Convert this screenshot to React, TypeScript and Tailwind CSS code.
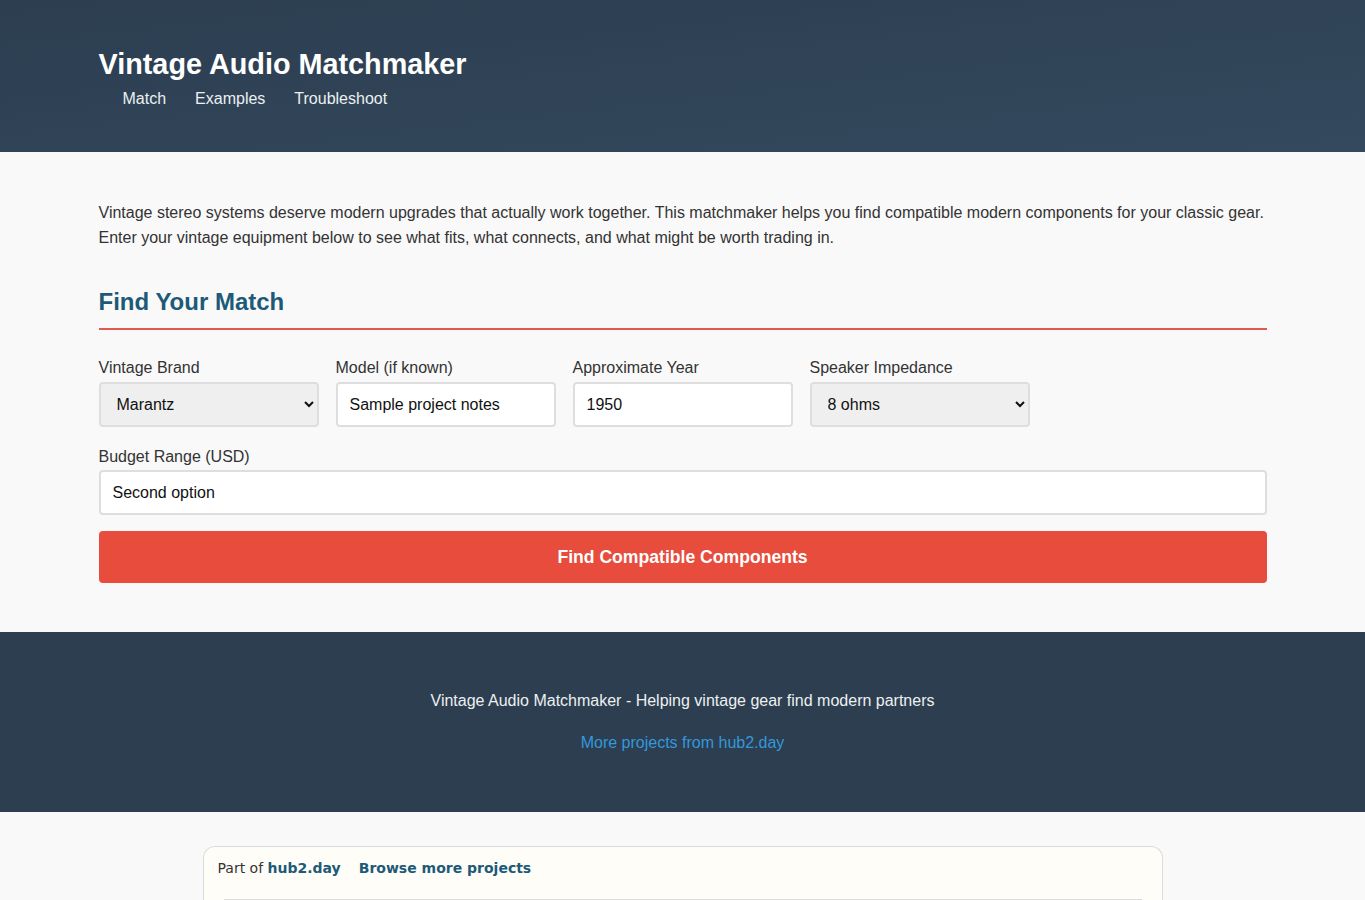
export default function App() {
  const fieldBox =
    'h-[45px] w-full rounded-[4px] border-2 border-[#dedede] px-[12px] text-[16px] text-[#111] outline-none'

  return (
    <div className="min-h-screen bg-[#f9f9f9] font-['Liberation_Sans',Arial,sans-serif] text-[#333]">
      {/* Header */}
      <header className="h-[152px] bg-gradient-to-br from-[#2c3e50] to-[#34495e] pt-[46px]">
        <div className="mx-auto w-[1168px]">
          <h1 className="text-[28.8px] font-bold leading-[36px] text-white">Vintage Audio Matchmaker</h1>
          <nav className="mt-[7px] flex gap-[29px] pl-[24px] text-[16px] leading-[20px] text-[#ecf0f1]">
            <a href="#match">Match</a>
            <a href="#examples">Examples</a>
            <a href="#troubleshoot">Troubleshoot</a>
          </nav>
        </div>
      </header>

      {/* Main */}
      <main className="mx-auto w-[1168px] pb-[49px] pt-[48px]">
        <p className="text-[16px] leading-[25px] text-[#333]">
          Vintage stereo systems deserve modern upgrades that actually work together. This matchmaker helps you find
          compatible modern components for your classic gear. Enter your vintage equipment below to see what fits, what
          connects, and what might be worth trading in.
        </p>

        <h2 className="mt-[37px] border-b-2 border-[#e15b4c] pb-[12px] text-[24px] font-bold leading-[29px] text-[#1d5a78]">
          Find Your Match
        </h2>

        <div className="mt-[28px] flex gap-[17px]">
          <div className="w-[220px]">
            <label className="block text-[16px] leading-[20px] text-[#333]">Vintage Brand</label>
            <select className={`${fieldBox} mt-[4px] bg-[#efefef] pl-[12px]`} defaultValue="Marantz">
              <option>Marantz</option>
              <option>Pioneer</option>
              <option>Sansui</option>
            </select>
          </div>
          <div className="w-[220px]">
            <label className="block text-[16px] leading-[20px] text-[#333]">Model (if known)</label>
            <input className={`${fieldBox} mt-[4px] bg-white`} defaultValue="Sample project notes" />
          </div>
          <div className="w-[220px]">
            <label className="block text-[16px] leading-[20px] text-[#333]">Approximate Year</label>
            <input className={`${fieldBox} mt-[4px] bg-white`} defaultValue="1950" />
          </div>
          <div className="w-[220px]">
            <label className="block text-[16px] leading-[20px] text-[#333]">Speaker Impedance</label>
            <select className={`${fieldBox} mt-[4px] bg-[#efefef] pl-[12px]`} defaultValue="8 ohms">
              <option>4 ohms</option>
              <option>8 ohms</option>
              <option>16 ohms</option>
            </select>
          </div>
        </div>

        <div className="mt-[20px]">
          <label className="block text-[16px] leading-[20px] text-[#333]">Budget Range (USD)</label>
          <input className={`${fieldBox} mt-[3px] h-[44px] bg-white`} defaultValue="Second option" />
        </div>

        <button className="mt-[16px] h-[52px] w-full rounded-[4px] bg-[#e74c3c] text-[17.6px] font-bold text-white">
          Find Compatible Components
        </button>
      </main>

      {/* Footer */}
      <footer className="h-[180px] bg-[#2c3e50] pt-[59px] text-center">
        <p className="text-[16px] leading-[20px] text-[#ecf0f1]">
          Vintage Audio Matchmaker - Helping vintage gear find modern partners
        </p>
        <a href="#" className="mt-[22px] block text-[16px] leading-[20px] text-[#3498db]">
          More projects from hub2.day
        </a>
      </footer>

      {/* hub2 bar */}
      <div className="pt-[34px]">
        <div className="mx-auto h-[80px] w-[960px] rounded-t-[12px] border border-b-0 border-[#dcdcdc] bg-[#fffdf8] px-[14px] pt-[11px] font-['DejaVu_Sans',sans-serif] text-[14px]">
          <div className="flex gap-[18px] leading-[20px]">
            <span className="text-[#333]">
              Part of <b className="text-[#1d5a78]">hub2.day</b>
            </span>
            <b className="text-[#1d5a78]">Browse more projects</b>
          </div>
          <div className="mx-[6px] mt-[21px] border-t-2 border-[#dcdcdc]" />
        </div>
      </div>
    </div>
  )
}
